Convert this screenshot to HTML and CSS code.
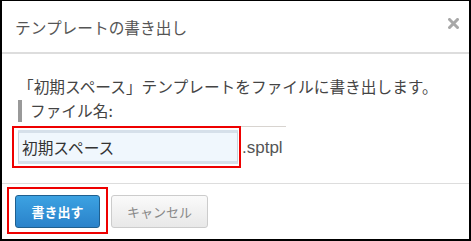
FILE: index.html
```html
<!DOCTYPE html>
<html lang="ja">
<head>
    <meta charset="UTF-8">
    <title>テンプレートの書き出し</title>
    <link rel="stylesheet" href="styles.css">
</head>
<body>
    <div class="dialog">
        <div class="dialog-header">
            <span class="dialog-title">テンプレートの書き出し</span>
            <svg class="dialog-close" width="11" height="11" viewBox="0 0 11 11">
                <path d="M1.5 1.5 L9.5 9.5 M9.5 1.5 L1.5 9.5" stroke="#a8a8a8" stroke-width="3" stroke-linecap="square"/>
            </svg>
        </div>
        <div class="dialog-body">
            <p class="message">「初期スペース」テンプレートをファイルに書き出します。</p>
            <div class="field-label">ファイル名:</div>
            <div class="field-row">
                <div class="mark input-mark">
                    <input type="text" class="file-input" value="初期スペース">
                </div>
                <span class="ext">.sptpl</span>
            </div>
        </div>
        <div class="dialog-footer">
            <div class="mark button-mark">
                <button class="btn btn-primary">書き出す</button>
            </div>
            <button class="btn btn-cancel">キャンセル</button>
        </div>
    </div>
</body>
</html>
```

FILE: styles.css
```css
html, body {
    margin: 0;
    padding: 0;
    background: #fff;
}

body {
    font-family: "Noto Sans CJK JP", "Noto Sans", sans-serif;
    color: #444;
}

.dialog {
    width: 471px;
    height: 241px;
    box-sizing: border-box;
    border-top: 1px solid #000;
    border-left: 2px solid #000;
    border-right: 2px solid #000;
    border-bottom: 2px solid #000;
    display: flex;
    flex-direction: column;
}

.dialog-header {
    height: 53px;
    border-bottom: 2px solid #ddd;
    display: flex;
    align-items: center;
    justify-content: space-between;
    padding: 0 10px 0 13px;
    box-sizing: border-box;
    flex: none;
}

.dialog-title {
    font-size: 15.7px;
    color: #555;
    line-height: 1;
    margin-top: 3px;
}

.dialog-close {
    display: block;
    margin-top: -7px;
}

.dialog-body {
    padding: 23px 0 0 16px;
    height: 129px;
    box-sizing: border-box;
    flex: none;
}

.message {
    margin: 0;
    font-size: 15.7px;
    line-height: 20px;
    color: #444;
}

.field-label {
    margin-top: 3px;
    border-left: 4px solid #999;
    padding-left: 8px;
    font-size: 15.7px;
    line-height: 22px;
    height: 22px;
    color: #444;
}

.field-row {
    display: flex;
    align-items: center;
    width: 268px;
    border-top: 1px solid #d8d4d0;
    margin-top: 4px;
}

.mark {
    border: 2px solid #e00;
    box-sizing: border-box;
}

.input-mark {
    margin-left: -6px;
    margin-top: -1px;
    padding: 2px 1px 2px 4px;
}

.file-input {
    display: block;
    width: 220px;
    height: 34px;
    box-sizing: border-box;
    border: 1px solid #c9d3dc;
    border-top: 3px solid #d6e0ea;
    border-bottom: 3px solid #d6e0ea;
    background: #f0f7fd;
    font-family: "Noto Sans CJK JP", sans-serif;
    font-size: 15.7px;
    color: #333;
    padding: 0 3px;
    outline: none;
}

.ext {
    font-family: "Liberation Sans", sans-serif;
    font-size: 17px;
    color: #555;
    margin-left: 1px;
}

.dialog-footer {
    flex: 1;
    border-top: 1px solid #ddd;
    display: flex;
    align-items: flex-start;
    padding: 3px 0 0 5px;
}

.button-mark {
    padding: 6px 6px 4px 6px;
    width: 101px;
    height: 47px;
}

.btn {
    height: 33px;
    border-radius: 3px;
    font-family: "Noto Sans CJK JP", sans-serif;
    font-size: 13px;
    cursor: pointer;
}

.btn-primary {
    width: 85px;
    background: linear-gradient(#3ca2e2, #2a82ca);
    border: 1px solid #1f5f8f;
    color: #fff;
    font-weight: bold;
}

.btn-cancel {
    width: 97px;
    margin-top: 8px;
    margin-left: 3px;
    background: linear-gradient(#fafafa, #e8e8e8);
    border: 1px solid #ccc;
    color: #888;
}
```
